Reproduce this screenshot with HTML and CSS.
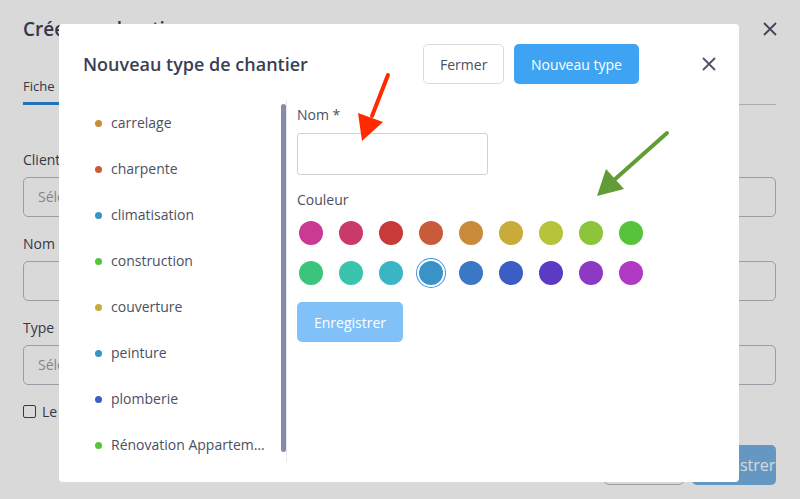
FILE: index.html
```html
<!DOCTYPE html>
<html lang="fr">
<head>
<meta charset="UTF-8" />
<meta name="viewport" content="width=device-width, initial-scale=1" />
<title>Créer un chantier</title>
<link rel="stylesheet" href="styles.css">
</head>
<body>

<div class="page">
  <div class="page-head">
    <h1>Créer un chantier</h1>
    <svg class="close-x" width="14" height="14" viewBox="0 0 14 14"><path d="M1 1L13 13M13 1L1 13" /></svg>
  </div>
  <div class="tabs">
    <span class="tab active">Fiche</span>
  </div>

  <label class="field-label">Client</label>
  <div class="field select">Sélectionner</div>

  <label class="field-label">Nom</label>
  <div class="field"></div>

  <label class="field-label">Type</label>
  <div class="field select">Sélectionner</div>

  <label class="check"><span class="box"></span>Le chantier</label>

  <div class="page-foot">
    <button class="btn btn-outline">Annuler</button>
    <button class="btn btn-blue-dim">Enregistrer</button>
  </div>
</div>

<div class="overlay"></div>

<div class="modal">
  <div class="modal-head">
    <h2>Nouveau type de chantier</h2>
    <div class="head-actions">
      <button class="btn btn-light">Fermer</button>
      <button class="btn btn-primary">Nouveau type</button>
      <svg class="close-x" width="14" height="14" viewBox="0 0 14 14"><path d="M1 1L13 13M13 1L1 13" /></svg>
    </div>
  </div>

  <div class="modal-body">
    <div class="type-list">
      <ul>
        <li><span class="dot" style="background:#c98b3a"></span>carrelage</li>
        <li><span class="dot" style="background:#c85b3a"></span>charpente</li>
        <li><span class="dot" style="background:#3a93c6"></span>climatisation</li>
        <li><span class="dot" style="background:#55c43a"></span>construction</li>
        <li><span class="dot" style="background:#c9ab3a"></span>couverture</li>
        <li><span class="dot" style="background:#3a93c6"></span>peinture</li>
        <li><span class="dot" style="background:#3a5ec4"></span>plomberie</li>
        <li><span class="dot" style="background:#55c43a"></span>Rénovation Appartement</li>
      </ul>
      <div class="scrollbar"></div>
    </div>

    <div class="type-form">
      <label class="form-label">Nom *</label>
      <input type="text" class="name-input" />

      <label class="form-label couleur">Couleur</label>
      <div class="swatches">
        <span class="sw"><i style="background:#c93a93"></i></span>
        <span class="sw"><i style="background:#c93a6a"></i></span>
        <span class="sw"><i style="background:#c63a3a"></i></span>
        <span class="sw"><i style="background:#c85b3a"></i></span>
        <span class="sw"><i style="background:#c98b3a"></i></span>
        <span class="sw"><i style="background:#c9ab3a"></i></span>
        <span class="sw"><i style="background:#b5c43a"></i></span>
        <span class="sw"><i style="background:#8cc43a"></i></span>
        <span class="sw"><i style="background:#55c43a"></i></span>
        <span class="sw"><i style="background:#3ac47c"></i></span>
        <span class="sw"><i style="background:#3ac4ad"></i></span>
        <span class="sw"><i style="background:#3ab5c4"></i></span>
        <span class="sw selected"><i style="background:#3a93c6"></i></span>
        <span class="sw"><i style="background:#3a77c4"></i></span>
        <span class="sw"><i style="background:#3a5ec4"></i></span>
        <span class="sw"><i style="background:#5b3ac4"></i></span>
        <span class="sw"><i style="background:#8c3ac4"></i></span>
        <span class="sw"><i style="background:#b03ac4"></i></span>
      </div>

      <button class="btn btn-save" disabled>Enregistrer</button>
    </div>
  </div>
</div>

<!-- flèches d'annotation -->
<svg class="arrows" width="800" height="499" viewBox="0 0 800 499">
  <line x1="388" y1="75" x2="372" y2="116" stroke="#ff2a00" stroke-width="4" stroke-linecap="round"/>
  <polygon points="362,141 358,113 383,122" fill="#ff2a00"/>
  <line x1="667" y1="133" x2="613" y2="181" stroke="#629c37" stroke-width="4" stroke-linecap="round"/>
  <polygon points="597,196 606,169 624,189" fill="#629c37"/>
</svg>

</body>
</html>
```

FILE: styles.css
```css
body {
  margin: 0;
  font-family: "Open Sans", "Noto Sans", sans-serif;
  color: #3d4256;
  background: #fff;
  overflow: hidden;
}

/* page derrière la modale */
.page {
  padding: 10px 24px 0 23px;
  height: 499px;
  box-sizing: border-box;
}
.page-head {
  display: flex;
  justify-content: space-between;
  align-items: center;
  height: 38px;
}
.page-head h1 {
  margin: 0;
  font-size: 19px;
  font-weight: 600;
}
.page-head .close-x {
  margin-right: -1px;
}
.tabs {
  margin-top: 26px;
  border-bottom: 1px solid #c8cad4;
  height: 30px;
}
.tab {
  display: inline-block;
  font-size: 13px;
  font-weight: 500;
  padding: 0 4px 6px 0;
  line-height: 20px;
}
.tab.active {
  border-bottom: 3px solid #2b88d8;
}
.field-label {
  display: block;
  font-size: 14px;
  margin: 45px 0 7px;
  line-height: 20px;
}
.field {
  height: 40px;
  border: 1px solid #b7b9c4;
  border-radius: 5px;
  box-sizing: border-box;
  padding: 0 14px;
  line-height: 38px;
  font-size: 14px;
  color: #9a9dab;
}
.field-label:nth-of-type(2), .field-label:nth-of-type(3) { margin-top: 17px; }
.check {
  display: flex;
  align-items: center;
  gap: 6px;
  margin-top: 17px;
  font-size: 14px;
}
.check .box {
  width: 11px;
  height: 11px;
  border: 1px solid #444;
  border-radius: 2px;
}
.page-foot {
  display: flex;
  justify-content: flex-end;
  gap: 8px;
  margin-top: 24px;
}
.btn {
  height: 40px;
  padding: 0 16px;
  border-radius: 5px;
  font-family: inherit;
  font-size: 14px;
  border: 1px solid transparent;
  white-space: nowrap;
}
.btn-outline {
  background: #fff;
  border-color: #b7b9c4;
  width: 80px;
}
.btn-blue-dim {
  background: #76b3e6;
  color: #fff;
  width: 84px;
  font-size: 16px;
  text-align: right;
  padding: 0 6px 0 0;
}
.close-x {
  display: block;
  fill: none;
  stroke: #4d5268;
  stroke-width: 1.8;
}

.overlay {
  position: fixed;
  inset: 0;
  background: rgba(0, 0, 0, 0.15);
}

/* modale */
.modal {
  position: fixed;
  left: 59px;
  top: 24px;
  width: 680px;
  height: 458px;
  background: #fff;
  border-radius: 4px;
  box-sizing: border-box;
  padding: 20px 23px 0 24px;
}
.modal-head {
  display: flex;
  justify-content: space-between;
  align-items: center;
  height: 40px;
}
.modal-head h2 {
  margin: 0;
  font-size: 18px;
  font-weight: 600;
  color: #3a3f54;
}
.head-actions {
  display: flex;
  align-items: center;
  gap: 10px;
}
.btn-light {
  background: #fff;
  border-color: #dadbe0;
  color: #4a4e60;
  width: 81px;
}
.btn-primary {
  background: #3ea3f2;
  color: #fff;
  font-weight: 500;
  width: 125px;
  padding: 0;
}
.head-actions .close-x {
  margin-left: 53px;
}
.modal-body {
  display: flex;
  margin-top: 16px;
}
.type-list {
  width: 204px;
  height: 362px;
  display: flex;
  border-right: 1px solid #e6e7ec;
  box-sizing: border-box;
}
.type-list ul {
  list-style: none;
  margin: 0;
  padding: 0 14px 0 12px;
  flex: 1;
  min-width: 0;
}
.type-list li {
  display: block;
  line-height: 46px;
  height: 46px;
  font-size: 14px;
  color: #4b5064;
  white-space: nowrap;
  overflow: hidden;
  text-overflow: ellipsis;
}
.dot {
  display: inline-block;
  width: 7px;
  height: 7px;
  border-radius: 50%;
  margin-right: 9px;
  vertical-align: 1px;
}
.scrollbar {
  width: 5px;
  height: 348px;
  margin-top: 4px;
  margin-left: 2px;
  background: #878ca6;
  border-radius: 3px;
}
.type-form {
  padding: 4px 0 0 10px;
}
.form-label {
  display: block;
  font-size: 14px;
  line-height: 20px;
  margin-top: 1px;
  color: #4b5064;
}
.name-input {
  display: block;
  margin-top: 8px;
  width: 191px;
  height: 42px;
  box-sizing: border-box;
  border: 1px solid #cfd0d8;
  border-radius: 3px;
}
.couleur {
  margin-top: 15px;
}
.swatches {
  display: grid;
  grid-template-columns: repeat(9, 28px);
  gap: 12px;
  margin-top: 9px;
}
.sw {
  width: 28px;
  height: 28px;
  display: flex;
  align-items: center;
  justify-content: center;
}
.sw i {
  display: block;
  width: 24px;
  height: 24px;
  border-radius: 50%;
}
.sw.selected i {
  box-shadow: 0 0 0 2px #fff, 0 0 0 3px #3a98e6;
}
.btn-save {
  margin-top: 15px;
  width: 106px;
  background: #80c2f7;
  color: #fff;
  font-weight: 500;
  padding: 0;
}

.arrows {
  position: fixed;
  left: 0;
  top: 0;
  pointer-events: none;
}
```
